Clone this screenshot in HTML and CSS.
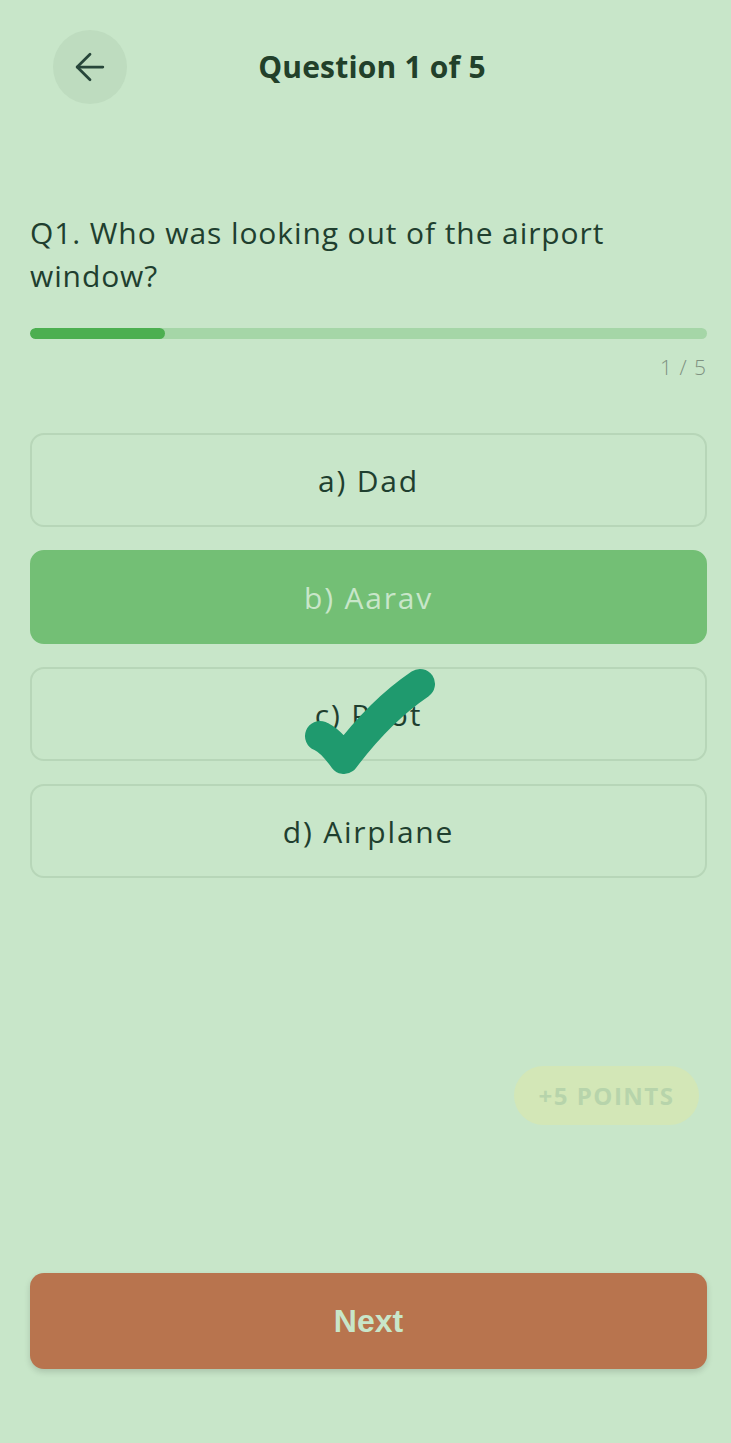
FILE: index.html
```html
<!DOCTYPE html>
<html lang="en">
<head>
<meta charset="utf-8">
<title>Quiz</title>
<link rel="stylesheet" href="styles.css">
</head>
<body>
<main class="screen">
  <header class="topbar">
    <button class="back" aria-label="Back">
      <svg width="44" height="44" viewBox="0 0 24 24" fill="none" stroke="#27463a" stroke-width="1.5" stroke-linecap="round" stroke-linejoin="round"><path d="M19 12H5"/><path d="M12 5l-7 7 7 7"/></svg>
    </button>
    <h1 class="title">Question 1 of 5</h1>
    <span class="spacer"></span>
  </header>

  <p class="question">Q1. Who was looking out of the airport window?</p>

  <div class="progress"><div class="progress-fill" style="width:20%"></div></div>
  <div class="count">1 / 5</div>

  <div class="options">
    <div class="option">a) Dad</div>
    <div class="option selected">b) Aarav</div>
    <div class="option">c) Pilot</div>
    <div class="option">d) Airplane</div>
    <svg class="check" width="160" height="130" viewBox="0 0 160 130" fill="none">
      <path d="M20 70 Q30 74 44 93 Q80 45 120 18" stroke="#1f9a6e" stroke-width="30" stroke-linecap="round" stroke-linejoin="round"/>
    </svg>
  </div>

  <div class="points-row"><span class="points">+5 POINTS</span></div>

  <button class="next">Next</button>
</main>
</body>
</html>
```

FILE: styles.css
```css
* { box-sizing: border-box; }
html, body { margin: 0; padding: 0; }
body {
  background: #c8e6c9;
  font-family: "Open Sans", "Noto Sans", sans-serif;
  color: #1f3f2f;
}
.screen {
  min-height: 1443px;
  display: flex;
  flex-direction: column;
  padding: 30px 24px 74px 30px;
}
.topbar {
  display: grid;
  grid-template-columns: 74px 1fr 74px;
  align-items: center;
  padding: 0 0 0 23px;
  height: 74px;
}
.back {
  width: 74px;
  height: 74px;
  border-radius: 50%;
  border: none;
  background: #bedcbf;
  display: flex;
  align-items: center;
  justify-content: center;
  padding: 0;
}
.title {
  margin: 0 0 2px;
  text-align: center;
  font-size: 30px;
  font-weight: 700;
  letter-spacing: 0.2px;
  color: #22402a;
  padding-right: 16px;
}
.question {
  margin: 107px 0 0;
  font-size: 30px;
  line-height: 43px;
  font-weight: 400;
  color: #1f3f2f;
  letter-spacing: 0.9px;
}
.progress {
  margin-top: 31px;
  height: 11px;
  border-radius: 6px;
  background: #a5d6a7;
  overflow: hidden;
}
.progress-fill {
  height: 100%;
  border-radius: 6px;
  background: #4caf50;
}
.count {
  margin-top: 14px;
  text-align: right;
  font-size: 21px;
  font-weight: 300;
  letter-spacing: 1px;
  color: #7f9181;
}
.options {
  position: relative;
  margin-top: 52px;
  display: flex;
  flex-direction: column;
  gap: 23px;
}
.option {
  height: 94px;
  border: 2px solid #b7d6b8;
  border-radius: 14px;
  display: flex;
  align-items: center;
  justify-content: center;
  font-size: 30px;
  letter-spacing: 1.8px;
  color: #1f3f2f;
}
.option.selected {
  background: #73bf75;
  border-color: #73bf75;
  color: #c8e6c9;
}
.check {
  position: absolute;
  left: 270px;
  top: 233px;
}
.points-row {
  margin-top: 188px;
  display: flex;
  justify-content: flex-end;
  padding-right: 8px;
}
.points {
  display: inline-flex;
  align-items: center;
  justify-content: center;
  width: 185px;
  height: 59px;
  border-radius: 30px;
  background: #d3e7b7;
  color: #b7d4ab;
  font-size: 24px;
  font-weight: 700;
  letter-spacing: 1.5px;
}
.next {
  margin-top: auto;
  height: 96px;
  border: none;
  border-radius: 14px;
  background: #b8744e;
  color: #c8e6c9;
  font-family: "Liberation Sans", Arial, sans-serif;
  font-weight: 700;
  font-size: 32px;
  box-shadow: 0 3px 6px rgba(0, 0, 0, 0.15);
}
```
